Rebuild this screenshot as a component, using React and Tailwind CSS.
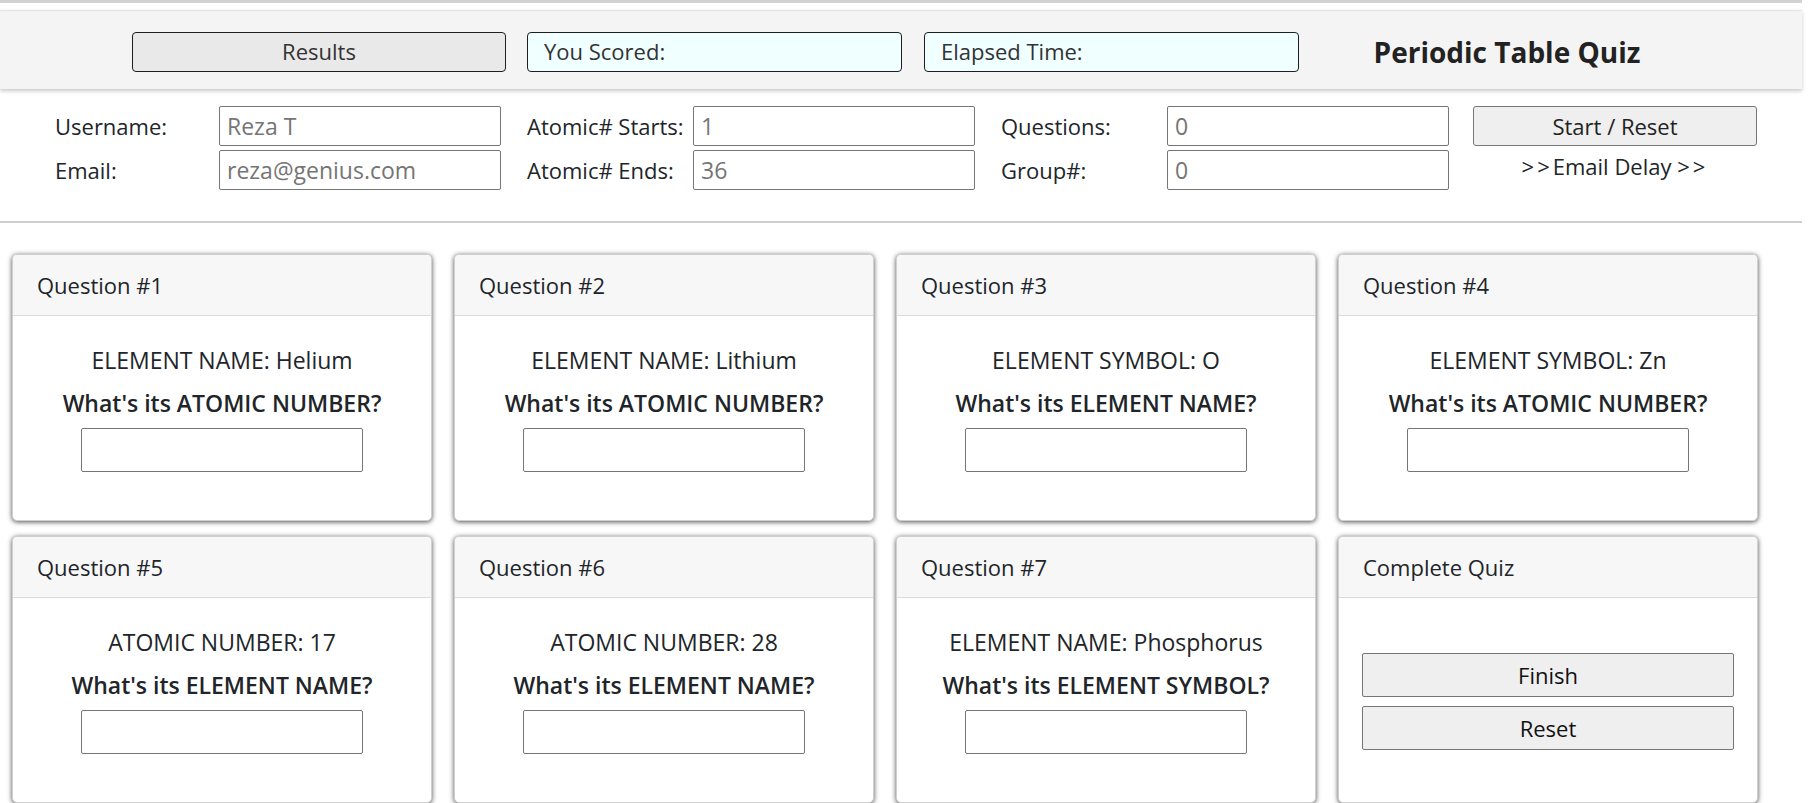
import React from 'react';

const questions = [
  { title: 'Question #1', given: 'ELEMENT NAME: Helium', ask: "What's its ATOMIC NUMBER?" },
  { title: 'Question #2', given: 'ELEMENT NAME: Lithium', ask: "What's its ATOMIC NUMBER?" },
  { title: 'Question #3', given: 'ELEMENT SYMBOL: O', ask: "What's its ELEMENT NAME?" },
  { title: 'Question #4', given: 'ELEMENT SYMBOL: Zn', ask: "What's its ATOMIC NUMBER?" },
  { title: 'Question #5', given: 'ATOMIC NUMBER: 17', ask: "What's its ELEMENT NAME?" },
  { title: 'Question #6', given: 'ATOMIC NUMBER: 28', ask: "What's its ELEMENT NAME?" },
  { title: 'Question #7', given: 'ELEMENT NAME: Phosphorus', ask: "What's its ELEMENT SYMBOL?" },
];

const Field = ({ value }) => (
  <input
    defaultValue={value}
    className="w-[282px] h-[40px] px-[7px] border border-[#767676] rounded-[2px] text-[23px] text-[#757575] bg-white outline-none"
  />
);

const FieldGroup = ({ rows, labelW }) => (
  <div className="flex flex-col gap-[4px]">
    {rows.map(([label, value]) => (
      <div key={label} className="flex items-center">
        <span className="whitespace-nowrap leading-[36px]" style={{ width: labelW }}>{label}</span>
        <Field value={value} />
      </div>
    ))}
  </div>
);

const Card = ({ title, children }) => (
  <div className="bg-white rounded-[5px] border border-[#cfcfcf] shadow-[0_1px_5px_rgba(0,0,0,0.7)] overflow-hidden flex flex-col">
    <div className="h-[61px] bg-[#f7f7f7] border-b border-[#dcdcdc] px-[24px] flex items-center">{title}</div>
    {children}
  </div>
);

const QuestionCard = ({ q }) => (
  <Card title={q.title}>
    <div className="flex flex-col items-center pt-[26px] pb-[48px]">
      <p className="leading-[36px] text-[23px]">{q.given}</p>
      <p className="leading-[36px] mt-[7px] font-semibold text-[23px]">{q.ask}</p>
      <input className="mt-[7px] w-[282px] h-[44px] border border-[#767676] rounded-[2px] bg-white outline-none" />
    </div>
  </Card>
);

export default function App() {
  return (
    <div className="w-[1802px] bg-white text-[#212529] text-[22px] font-['Open_Sans',sans-serif]">
      <div className="h-[3px] bg-[#d2d2d2]" />
      <div className="mt-[7px] h-[79px] bg-[#f4f4f4] border-t border-[#e4e4e4] shadow-[0_2px_4px_rgba(0,0,0,0.22)] flex items-center pl-[132px] pt-[3px]">
        <button className="w-[374px] h-[40px] bg-[#e9e9e9] border border-[#1e1e1e] rounded-[4px] text-[#333]">Results</button>
        <div className="ml-[21px] w-[375px] h-[40px] bg-[#f0ffff] border border-[#1e1e1e] rounded-[4px] pl-[16px] flex items-center text-[#333]">You Scored:</div>
        <div className="ml-[22px] w-[375px] h-[40px] bg-[#f0ffff] border border-[#1e1e1e] rounded-[4px] pl-[16px] flex items-center text-[#333]">Elapsed Time:</div>
        <div className="ml-[21px] w-[374px] text-center text-[28px] font-bold text-[#222]">Periodic Table Quiz</div>
      </div>

      <div className="flex pl-[55px] pt-[17px] pb-[31px] border-b-2 border-[#cfcfcf]">
        <FieldGroup labelW={164} rows={[['Username:', 'Reza T'], ['Email:', 'reza@genius.com']]} />
        <div className="ml-[26px]">
          <FieldGroup labelW={166} rows={[['Atomic# Starts:', '1'], ['Atomic# Ends:', '36']]} />
        </div>
        <div className="ml-[26px]">
          <FieldGroup labelW={166} rows={[['Questions:', '0'], ['Group#:', '0']]} />
        </div>
        <div className="ml-[24px] w-[284px] flex flex-col items-center">
          <button className="w-full h-[40px] bg-[#efefef] border border-[#767676] rounded-[3px] text-[#222]">Start / Reset</button>
          <span className="mt-[2px] leading-[36px]"><span className="tracking-[3px]">&gt;&gt;</span>Email Delay <span className="tracking-[3px]">&gt;&gt;</span></span>
        </div>
      </div>

      <div className="grid grid-cols-[repeat(4,420px)] gap-x-[22px] gap-y-[15px] pl-[12px] pt-[31px]">
        {questions.map(q => <QuestionCard key={q.title} q={q} />)}
        <Card title="Complete Quiz">
          <div className="flex flex-col gap-[9px] px-[23px] pt-[55px] pb-[50px]">
            <button className="h-[44px] bg-[#efefef] border border-[#767676] rounded-[2px] text-[#111]">Finish</button>
            <button className="h-[44px] bg-[#efefef] border border-[#767676] rounded-[2px] text-[#111]">Reset</button>
          </div>
        </Card>
      </div>
    </div>
  );
}
